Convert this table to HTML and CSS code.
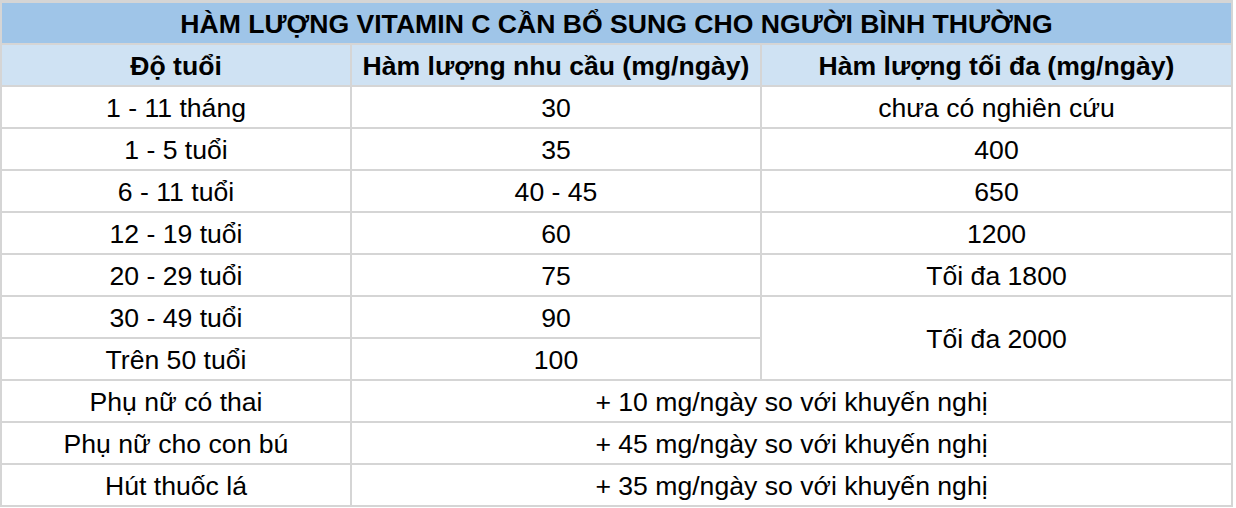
FILE: index.html
```html
<!DOCTYPE html>
<html lang="vi">
<head>
<meta charset="utf-8">
<title>Hàm lượng vitamin C</title>
<link rel="stylesheet" href="styles.css">
</head>
<body>
<div class="sheet">
  <div class="cell title span3">HÀM LƯỢNG VITAMIN C CẦN BỔ SUNG CHO NGƯỜI BÌNH THƯỜNG</div>

  <div class="cell head">Độ tuổi</div>
  <div class="cell head">Hàm lượng nhu cầu (mg/ngày)</div>
  <div class="cell head">Hàm lượng tối đa (mg/ngày)</div>

  <div class="cell">1 - 11 tháng</div>
  <div class="cell">30</div>
  <div class="cell">chưa có nghiên cứu</div>

  <div class="cell">1 - 5 tuổi</div>
  <div class="cell">35</div>
  <div class="cell">400</div>

  <div class="cell">6 - 11 tuổi</div>
  <div class="cell">40 - 45</div>
  <div class="cell">650</div>

  <div class="cell">12 - 19 tuổi</div>
  <div class="cell">60</div>
  <div class="cell">1200</div>

  <div class="cell">20 - 29 tuổi</div>
  <div class="cell">75</div>
  <div class="cell">Tối đa 1800</div>

  <div class="cell">30 - 49 tuổi</div>
  <div class="cell">90</div>
  <div class="cell rspan2">Tối đa 2000</div>

  <div class="cell">Trên 50 tuổi</div>
  <div class="cell">100</div>

  <div class="cell">Phụ nữ có thai</div>
  <div class="cell span2">+ 10 mg/ngày so với khuyến nghị</div>

  <div class="cell">Phụ nữ cho con bú</div>
  <div class="cell span2">+ 45 mg/ngày so với khuyến nghị</div>

  <div class="cell">Hút thuốc lá</div>
  <div class="cell span2">+ 35 mg/ngày so với khuyến nghị</div>
</div>
</body>
</html>
```

FILE: styles.css
```css
html, body {
  margin: 0;
  padding: 0;
  background: #ffffff;
}

body {
  font-family: "Liberation Sans", Arial, Helvetica, sans-serif;
  color: #000000;
}

.sheet {
  display: grid;
  grid-template-columns: 348px 408px 469px;
  grid-auto-rows: 40px;
  gap: 2px;
  padding: 3px 2px 2px 2px;
  width: max-content;
  background: #d5d5d5;
}

.cell {
  background: #ffffff;
  display: flex;
  align-items: center;
  justify-content: center;
  font-size: 26.6px;
  line-height: 1;
  white-space: nowrap;
  padding-top: 3px;
  box-sizing: border-box;
}

.title {
  background: #9fc5e8;
  font-weight: bold;
}

.head {
  background: #cfe2f3;
  font-weight: bold;
}

.span3 {
  grid-column: span 3;
}

.span2 {
  grid-column: span 2;
}

.rspan2 {
  grid-row: span 2;
}
```
